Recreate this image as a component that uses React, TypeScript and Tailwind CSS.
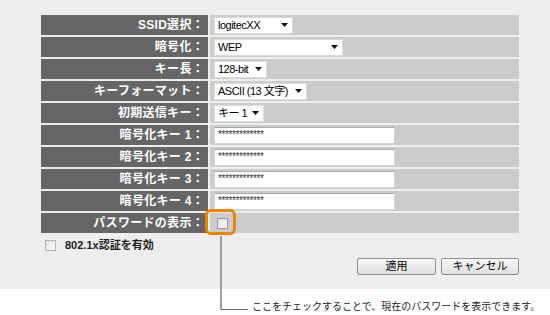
import React from "react";

const jp = { fontFamily: '"Liberation Sans", "Noto Sans CJK JP", sans-serif' };

function Sel({ w, text }: { w: number; text: string }) {
  return (
    <div
      className="flex h-[17px] shrink-0 items-center justify-between gap-[3px] whitespace-nowrap bg-white border border-[#dcdcdc] pl-[3px] pr-[4px] text-[11px] text-black leading-none tracking-[-0.5px]"
      style={{ width: w }}
    >
      <span>{text}</span>
      <svg className="shrink-0" width="7" height="4" viewBox="0 0 7 4">
        <path d="M0 0H7L3.5 4Z" fill="#111" />
      </svg>
    </div>
  );
}

function Inp() {
  return (
    <div className="flex h-[17px] w-[181px] shrink-0 items-center whitespace-nowrap bg-white border border-[#d4d4d4] border-t-[#aaa] pl-[3px] text-[10px] text-[#333] leading-none tracking-[-0.4px]">
      *************
    </div>
  );
}

function Row({ label, children }: { label: string; children?: React.ReactNode }) {
  return (
    <div className="flex h-[20px] gap-[2px]">
      <div className="flex w-[167px] items-center justify-end whitespace-nowrap bg-[#666666] pr-[4px] text-[12px] font-bold text-white leading-none tracking-[0.3px]">
        {label}
      </div>
      <div className="flex flex-1 items-center bg-[#cccccc] pl-[4px]">{children}</div>
    </div>
  );
}

export default function App() {
  return (
    <div className="relative w-[550px] h-[315px] bg-white overflow-hidden" style={jp}>
      <div className="h-[289px] bg-[#eeeeee] pt-[15px] pl-[41px]">
        <div className="flex w-[478px] flex-col gap-[2px]">
          <Row label="SSID選択：">
            <Sel w={79} text="logitecXX" />
          </Row>
          <Row label="暗号化：">
            <Sel w={129} text="WEP" />
          </Row>
          <Row label="キー長：">
            <Sel w={53} text="128-bit" />
          </Row>
          <Row label="キーフォーマット：">
            <Sel w={93} text="ASCII (13 文字)" />
          </Row>
          <Row label="初期送信キー：">
            <Sel w={50} text="キー 1" />
          </Row>
          <Row label="暗号化キー 1：">
            <Inp />
          </Row>
          <Row label="暗号化キー 2：">
            <Inp />
          </Row>
          <Row label="暗号化キー 3：">
            <Inp />
          </Row>
          <Row label="暗号化キー 4：">
            <Inp />
          </Row>
          <Row label="パスワードの表示：">
            <div className="relative ml-[3px]">
              <div className="h-[11px] w-[11px] border border-[#9a9a9a] bg-gradient-to-br from-[#e0e0e0] to-[#f8f8f8]" />
              <div className="absolute left-[-12px] top-[-9px] h-[26px] w-[31px] rounded-[6px] border-[3px] border-[#f08300]" />
            </div>
          </Row>
        </div>
        <div className="mt-[4px] flex items-center pl-[4px]">
          <div className="h-[11px] w-[11px] border border-[#b5b5b5] bg-gradient-to-br from-[#e4e4e4] to-[#fafafa]" />
          <span className="ml-[9px] text-[11px] font-bold text-[#222]">802.1x認証を有効</span>
        </div>
        <div className="mt-[4px] flex justify-end gap-[5px] pr-[31px]">
          <button className="h-[17px] w-[79px] rounded-[2px] border border-[#8e8e8e] bg-gradient-to-b from-[#fafafa] to-[#dedede] text-[11px] leading-none text-black">
            適用
          </button>
          <button className="h-[17px] w-[78px] rounded-[2px] border border-[#8e8e8e] bg-gradient-to-b from-[#fafafa] to-[#dedede] text-[11px] leading-none text-black">
            キャンセル
          </button>
        </div>
      </div>
      <div className="flex items-center pl-[252px] pt-[13px] text-[10px] text-[#222] leading-none">
        ここをチェックすることで、現在のパスワードを表示できます。
      </div>
      <svg className="pointer-events-none absolute left-0 top-0" width="550" height="315">
        <path d="M221 236V309.5H248" stroke="#666" strokeWidth="1.2" fill="none" />
      </svg>
    </div>
  );
}
